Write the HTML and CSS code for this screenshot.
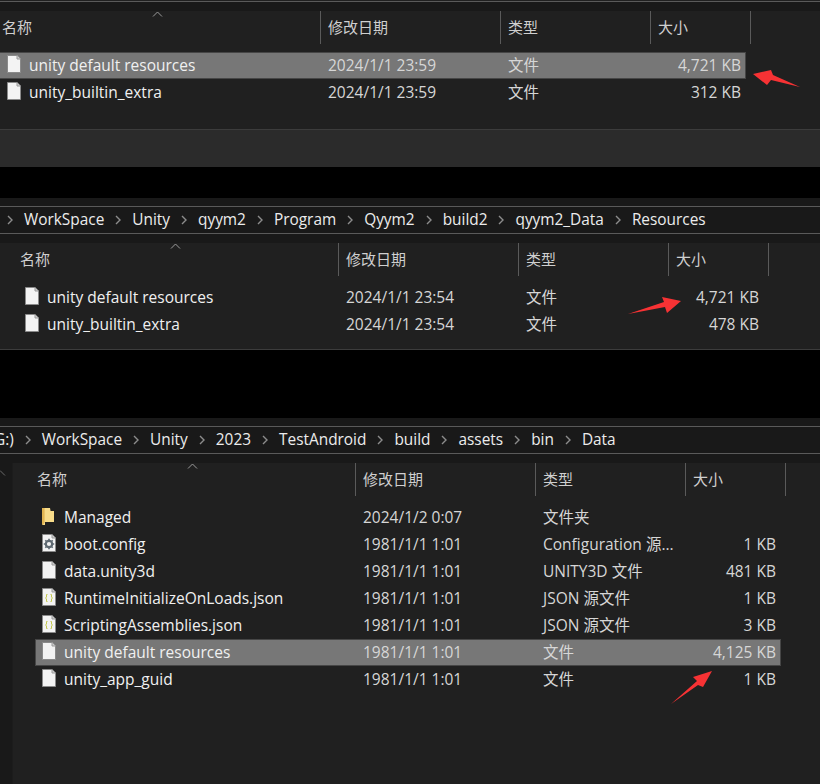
FILE: index.html
```html
<!DOCTYPE html>
<html lang="zh">
<head>
<meta charset="utf-8">
<title>Explorer</title>
<link rel="stylesheet" href="styles.css">
</head>
<body>
<svg class="defs" width="0" height="0" aria-hidden="true">
  <symbol id="doc" viewBox="0 0 14 18">
    <path d="M0.5 0.5H10L13.5 4V17.5H0.5Z" fill="#f3f3f3" stroke="#8a8a8a"/>
    <path d="M10 0.5V4H13.5" fill="#cfcfcf" stroke="#9a9a9a"/>
  </symbol>
  <symbol id="cfg" viewBox="0 0 14 18">
    <path d="M0.5 0.5H10L13.5 4V17.5H0.5Z" fill="#f3f3f3" stroke="#8a8a8a"/>
    <path d="M10 0.5V4H13.5" fill="#cfcfcf" stroke="#9a9a9a"/>
    <circle cx="7" cy="10" r="3.2" fill="none" stroke="#5f6a72" stroke-width="2.2"/>
    <path d="M7 4.8V6.4M7 13.6V15.2M1.8 10H3.4M10.6 10H12.2M3.3 6.3L4.5 7.5M9.5 12.5L10.7 13.7M10.7 6.3L9.5 7.5M4.5 12.5L3.3 13.7" stroke="#5f6a72" stroke-width="1.6"/>
  </symbol>
  <symbol id="json" viewBox="0 0 14 18">
    <path d="M0.5 0.5H10L13.5 4V17.5H0.5Z" fill="#f3f3f3" stroke="#8a8a8a"/>
    <path d="M10 0.5V4H13.5" fill="#cfcfcf" stroke="#9a9a9a"/>
    <path d="M5.5 6.5H4.5V9L3.5 10L4.5 11V13.5H5.5M8.5 6.5H9.5V9L10.5 10L9.5 11V13.5H8.5" fill="none" stroke="#c4c84e" stroke-width="1"/>
  </symbol>
  <symbol id="folder" viewBox="0 0 12 17">
    <path d="M0 0H8L8.6 3H12V14H3V17H0.8L0 16Z" fill="#f8dc8a"/>
    <path d="M0 0H2.6V14.5L0.8 17L0 16Z" fill="#e2b552"/>
  </symbol>
  <symbol id="chev" viewBox="0 0 6 10"><path d="M1 1L5 5L1 9" fill="none" stroke="#8c8c8c" stroke-width="1.4"/></symbol>
</svg>

<section class="window window-one">
  <div class="strip strip-top"></div>
  <div class="list list-one">
    <div class="cols head">
      <div class="hc hc-name">名称<svg class="caret" width="11" height="6" viewBox="0 0 11 6"><path d="M1 5.5L5.5 1L10 5.5" fill="none" stroke="#9a9a9a"/></svg></div>
      <div class="hc">修改日期</div>
      <div class="hc">类型</div>
      <div class="hc">大小</div>
    </div>
    <div class="row selected">
      <div class="c-name"><svg class="ic"><use href="#doc"/></svg>unity default resources</div>
      <div class="c">2024/1/1 23:59</div><div class="c">文件</div><div class="c c-size">4,721 KB</div>
    </div>
    <div class="row">
      <div class="c-name"><svg class="ic"><use href="#doc"/></svg>unity_builtin_extra</div>
      <div class="c">2024/1/1 23:59</div><div class="c">文件</div><div class="c c-size">312 KB</div>
    </div>
  </div>
  <div class="status"></div>
</section>

<section class="window window-two">
  <div class="strip"></div>
  <nav class="crumbs crumbs-two">
    <svg class="sep"><use href="#chev"/></svg><span>WorkSpace</span>
    <svg class="sep"><use href="#chev"/></svg><span>Unity</span>
    <svg class="sep"><use href="#chev"/></svg><span>qyym2</span>
    <svg class="sep"><use href="#chev"/></svg><span>Program</span>
    <svg class="sep"><use href="#chev"/></svg><span>Qyym2</span>
    <svg class="sep"><use href="#chev"/></svg><span>build2</span>
    <svg class="sep"><use href="#chev"/></svg><span>qyym2_Data</span>
    <svg class="sep"><use href="#chev"/></svg><span>Resources</span>
  </nav>
  <div class="strip strip-low"></div>
  <div class="list list-two">
    <div class="cols head">
      <div class="hc hc-name">名称<svg class="caret" width="11" height="6" viewBox="0 0 11 6"><path d="M1 5.5L5.5 1L10 5.5" fill="none" stroke="#9a9a9a"/></svg></div>
      <div class="hc">修改日期</div>
      <div class="hc">类型</div>
      <div class="hc">大小</div>
    </div>
    <div class="row">
      <div class="c-name"><svg class="ic"><use href="#doc"/></svg>unity default resources</div>
      <div class="c">2024/1/1 23:54</div><div class="c">文件</div><div class="c c-size">4,721 KB</div>
    </div>
    <div class="row">
      <div class="c-name"><svg class="ic"><use href="#doc"/></svg>unity_builtin_extra</div>
      <div class="c">2024/1/1 23:54</div><div class="c">文件</div><div class="c c-size">478 KB</div>
    </div>
  </div>
</section>

<section class="window window-three">
  <div class="strip"></div>
  <nav class="crumbs crumbs-three">
    <span class="drive">G:)</span>
    <svg class="sep"><use href="#chev"/></svg><span>WorkSpace</span>
    <svg class="sep"><use href="#chev"/></svg><span>Unity</span>
    <svg class="sep"><use href="#chev"/></svg><span>2023</span>
    <svg class="sep"><use href="#chev"/></svg><span>TestAndroid</span>
    <svg class="sep"><use href="#chev"/></svg><span>build</span>
    <svg class="sep"><use href="#chev"/></svg><span>assets</span>
    <svg class="sep"><use href="#chev"/></svg><span>bin</span>
    <svg class="sep"><use href="#chev"/></svg><span>Data</span>
  </nav>
  <div class="strip strip-low"></div>
  <div class="split">
    <aside class="rail"><svg class="rail-mark" width="6" height="7" viewBox="0 0 6 7"><path d="M0 0.5L5 5.5" fill="none" stroke="#6a6a6a"/></svg></aside>
    <div class="list list-three">
      <div class="cols head">
        <div class="hc hc-name">名称<svg class="caret" width="11" height="6" viewBox="0 0 11 6"><path d="M1 5.5L5.5 1L10 5.5" fill="none" stroke="#9a9a9a"/></svg></div>
        <div class="hc">修改日期</div>
        <div class="hc">类型</div>
        <div class="hc">大小</div>
      </div>
      <div class="row">
        <div class="c-name"><svg class="ic ic-folder"><use href="#folder"/></svg>Managed</div>
        <div class="c">2024/1/2 0:07</div><div class="c">文件夹</div><div class="c c-size"></div>
      </div>
      <div class="row">
        <div class="c-name"><svg class="ic"><use href="#cfg"/></svg>boot.config</div>
        <div class="c">1981/1/1 1:01</div><div class="c">Configuration 源...</div><div class="c c-size">1 KB</div>
      </div>
      <div class="row">
        <div class="c-name"><svg class="ic"><use href="#doc"/></svg>data.unity3d</div>
        <div class="c">1981/1/1 1:01</div><div class="c">UNITY3D 文件</div><div class="c c-size">481 KB</div>
      </div>
      <div class="row">
        <div class="c-name"><svg class="ic"><use href="#json"/></svg>RuntimeInitializeOnLoads.json</div>
        <div class="c">1981/1/1 1:01</div><div class="c">JSON 源文件</div><div class="c c-size">1 KB</div>
      </div>
      <div class="row">
        <div class="c-name"><svg class="ic"><use href="#json"/></svg>ScriptingAssemblies.json</div>
        <div class="c">1981/1/1 1:01</div><div class="c">JSON 源文件</div><div class="c c-size">3 KB</div>
      </div>
      <div class="row selected">
        <div class="c-name"><svg class="ic"><use href="#doc"/></svg>unity default resources</div>
        <div class="c">1981/1/1 1:01</div><div class="c">文件</div><div class="c c-size">4,125 KB</div>
      </div>
      <div class="row">
        <div class="c-name"><svg class="ic"><use href="#doc"/></svg>unity_app_guid</div>
        <div class="c">1981/1/1 1:01</div><div class="c">文件</div><div class="c c-size">1 KB</div>
      </div>
    </div>
  </div>
</section>

<svg class="marks" width="820" height="784" viewBox="0 0 820 784" aria-hidden="true">
  <path d="M753 74L771 70L773 75L800 87L771 80L767 85Z" fill="#f73234"/>
  <path d="M681 301L662 297L664 302L628 314L665 307L667 313Z" fill="#f73234"/>
  <path d="M712 671L693 677L697 681L671 704L698 685L703 687Z" fill="#f73234"/>
</svg>
</body>
</html>
```
FILE: styles.css
```css
* { box-sizing: border-box; }

html, body {
  margin: 0;
  height: 784px;
  overflow: hidden;
  background: #000;
}

body {
  position: relative;
  font-family: "Open Sans", "Noto Sans CJK SC", sans-serif;
  font-size: 15.5px;
  color: #f0f0f0;
}

.defs { position: absolute; }

.window { background: #202020; overflow: hidden; }
.window-one { height: 167px; }
.window-two { height: 152px; margin-top: 31px; }
.window-three { height: 366px; margin-top: 68px; }

.strip { height: 8px; background: #191919; }
.strip-top { height: 10px; margin-top: 1px; border-top: 1px solid #5a5a5a; }
.strip-low { height: 9px; }

.crumbs {
  height: 28px;
  display: flex;
  align-items: center;
  gap: 8px;
  padding-bottom: 2px;
  background: #191919;
  border-top: 1px solid #5a5a5a;
  border-bottom: 1px solid #5a5a5a;
  color: #ececec;
  font-size: 15.4px;
  white-space: nowrap;
}
.crumbs-two { padding-left: 4px; }
.crumbs-three { margin-left: -6px; }

.sep { width: 6px; height: 10px; margin: 2px 3px 0; flex: none; }

.list-one { height: 119px; border-bottom: 1px solid #3c3c3c; }
.list-two { height: 107px; padding-left: 18px; border-bottom: 1px solid #3c3c3c; }
.list-three { flex: 1; padding-left: 22px; }

.split { display: flex; height: 321px; }
.rail { width: 13px; flex: none; background: #191919; border-right: 1px solid #1c1c1c; padding-top: 7px; }
.rail-mark { display: block; }

.status { height: 37px; background: #2b2b2b; }

.cols, .row {
  display: grid;
  grid-template-columns: 321px 180px 150px 100px;
  width: 751px;
}

.head { height: 41px; align-items: start; }

.hc {
  height: 33px;
  line-height: 32px;
  padding-left: 7px;
  border-right: 1px solid #5a5a5a;
  color: #cfcfcf;
  font-size: 15px;
  position: relative;
}
.hc-name { padding-left: 2px; }

.caret { position: absolute; left: 152px; top: 0; }

.row {
  grid-template-columns: 321px 180px 150px 95px;
  width: 746px;
  height: 27px;
  line-height: 27px;
}

.selected {
  background: #777;
  box-shadow: inset 0 0 0 1px #464646;
}
.list-one .selected {
  box-shadow: inset 0 1px 0 #464646, inset 0 -1px 0 #464646, inset -1px 0 0 #464646;
}

.c-name {
  display: flex;
  align-items: center;
  gap: 8px;
  padding-left: 7px;
  white-space: nowrap;
}

.ic { width: 14px; height: 18px; flex: none; margin-top: -3px; }
.ic-folder { width: 12px; height: 17px; margin-right: 2px; }

.c { padding-left: 7px; color: #d6d6d6; white-space: nowrap; }
.c-size { padding: 0 5px 0 0; text-align: right; }

.marks { position: absolute; left: 0; top: 0; }
```
